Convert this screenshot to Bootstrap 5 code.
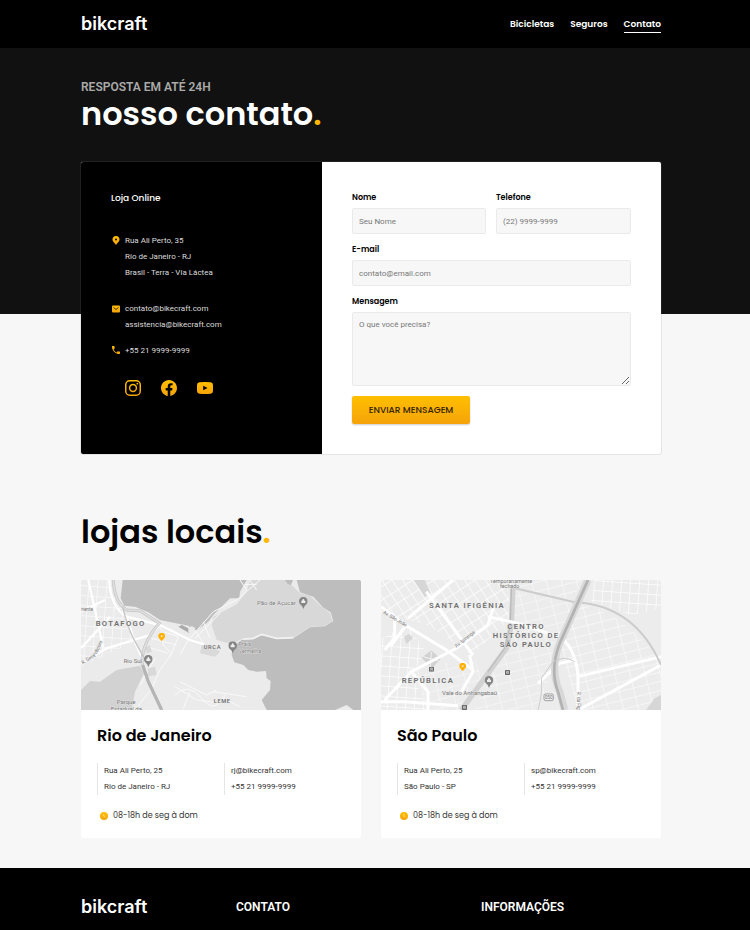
<!DOCTYPE html>
<html lang="pt-BR">
<head>
<meta charset="utf-8">
<meta name="viewport" content="width=device-width, initial-scale=1">
<title>Bikcraft - Contato</title>
<link href="https://cdn.jsdelivr.net/npm/bootstrap@5.3.0/dist/css/bootstrap.min.css" rel="stylesheet">
<style>
:root { --display: Poppins, Inter, sans-serif; --text: Roboto, sans-serif; --amber: #ffb700; }
body { background: #f7f7f7; font-family: var(--text); font-size: 8px; line-height: 16px; color: #333; }
a { color: inherit; text-decoration: none; }
.wrap { max-width: 588px; margin: 0 auto; padding-right: 8px; }
.topbar { background: #000; color: #fff; }
.topbar .wrap { height: 48px; }
.brand { font: 600 18px/20px Inter, sans-serif; color: #fff; }
.menu a { font: 600 9px/16px var(--display); display: block; border-bottom: 1px solid transparent; }
.menu a.active { border-color: #fff; }
.menu { gap: 16px; }
.intro { background: #111; padding: 30px 0 182px; }
.intro p { font-size: 12px; line-height: 18px; font-weight: 600; color: #aaa; }
.big-title { font: 600 32px/36px var(--display); margin: 0; }
.big-title span { color: var(--amber); }
.contact { margin-top: -152px; }
.panel { border-radius: 2px; overflow: hidden; box-shadow: 0 0 0 1px rgba(128,128,128,.15); background: #fff; }
.online { flex: 0 0 241px; background: #000; color: #ddd; padding: 28px 30px; }
.online h2 { font: 500 9px/16px var(--display); color: #fff; margin: 0 0 27px; }
.online address { display: grid; grid-template-columns: 10px 1fr; column-gap: 4px; margin: 0; }
.online address svg { margin: 3px 0 0 1px; }
.online .phone { padding-top: 10px; }
.social { gap: 20px; padding: 21px 0 0 14px; }
.social a, .social svg { display: block; }
.ask { padding: 30px; min-width: 0; display: grid; grid-template-columns: 134px 1fr; gap: 10px; align-content: start; }
.ask .wide { grid-column: 1 / -1; }
.ask label { display: block; font: 600 8px/12px var(--display); color: #000; margin-bottom: 4px; }
.ask .form-control { font: 400 8px/16px var(--text); padding: 4px 6px; min-height: 26px; height: 26px; border: 1px solid #eaeaea; border-radius: 2px; background-color: #f7f7f7; color: #333; }
.ask .form-control::placeholder { color: #777; }
.ask textarea.form-control { height: 74px; display: block; }
.send { font: 500 9px/12px var(--display); color: #332200; border: 0; border-radius: 2px; padding: 8px 15px; width: 118px; white-space: nowrap; background: linear-gradient(#ffbf00, #f5a30a); box-shadow: 0 1px 2px rgba(0,0,0,.2); }
.shops { padding: 60px 0 30px; }
.shops .big-title { color: #000; margin-bottom: 30px; }
.shop-grid { display: grid; grid-template-columns: repeat(auto-fit, minmax(240px, 1fr)); gap: 20px; }
.shop { background: #fff; border-radius: 2px; overflow: hidden; }
.shop .map { display: block; width: 100%; height: 130px; }
.shop-info { padding: 16px 16px 14px; }
.shop h3 { font: 600 16px/20px var(--display); color: #000; margin: 0 0 17px; }
.shop-data { display: grid; grid-template-columns: 1fr 1fr; gap: 6px; }
.shop-data div { border-left: 1px solid #e5e5e5; padding-left: 6px; }
.hours { font: 400 8px/16px var(--display); gap: 5px; padding: 13px 0 0 3px; margin: 0; }
.foot { background: #000; color: #fff; padding: 29px 0; }
.foot-grid { display: grid; grid-template-columns: 155px 245px 1fr; align-items: center; }
.foot h2 { font: 600 12px/20px var(--text); margin: 0; }
.map text { font-family: Roboto, sans-serif; font-weight: 400; fill: #777; paint-order: stroke; stroke: #eee; stroke-width: 2px; font-size: 18px; }
.map .area { font-weight: 600; font-size: 23px; fill: #707070; letter-spacing: 4px; }
.map .area.spot { font-size: 17px; letter-spacing: 2px; }
.map .note { font-size: 16px; }
.map .street { font-size: 14px; }
</style>
</head>
<body>
<svg width="0" height="0" class="position-absolute" aria-hidden="true">
  <defs>
    <linearGradient id="gold" x2="0" y2="1"><stop stop-color="#ffbf00"/><stop offset="1" stop-color="#f5a30a"/></linearGradient>
    <pattern id="gridA" width="26" height="34" patternUnits="userSpaceOnUse" patternTransform="rotate(-33)"><path d="M0 0H26M0 0V34" stroke="#fff" stroke-width="4" fill="none"/></pattern>
    <pattern id="gridB" width="27" height="30" patternUnits="userSpaceOnUse" patternTransform="rotate(4)"><path d="M0 0H27M0 0V30" stroke="#fff" stroke-width="4" fill="none"/></pattern>
    <pattern id="gridC" width="44" height="27" patternUnits="userSpaceOnUse" patternTransform="rotate(-14)"><path d="M0 0H44M0 0V27" stroke="#fff" stroke-width="3" fill="none"/></pattern>
    <symbol id="pin" viewBox="0 0 24 28"><path fill-rule="evenodd" d="M12 0C5 0 1 5 1 11c0 7 7 11 11 17 4-6 11-10 11-17C23 5 19 0 12 0zm0 8a3 3 0 1 1 0 6 3 3 0 0 1 0-6z"/></symbol>
    <symbol id="poi" viewBox="0 0 26 36"><path fill="#858585" d="M13 0C5 0 0 5 0 13c0 7 5 11 9 14l4 9 4-9c4-3 9-7 9-14C26 5 21 0 13 0z"/><path fill="#eee" d="M7 18v-7h3V8l3-3 3 3v3h3v7z"/></symbol>
    <symbol id="metro" viewBox="0 0 15 15"><rect width="15" height="15" rx="2" fill="#666"/><path d="M5 4h5v5H5zM4 12l2-2m5 2l-2-2" stroke="#eee" stroke-width="2" fill="none"/></symbol>
    <symbol id="clock" viewBox="0 0 8 8"><circle cx="4" cy="4" r="4" fill="url(#gold)"/><path d="M3.8 2v2.2l1.4 1" fill="none" stroke="#ffe7a0" stroke-width=".8"/></symbol>
  </defs>
</svg>

<header class="topbar">
  <div class="wrap d-flex align-items-center justify-content-between">
    <a class="brand" href="#">bikcraft</a>
    <nav aria-label="Principal"><ul class="menu list-unstyled d-flex m-0">
      <li><a href="#">Bicicletas</a></li><li><a href="#">Seguros</a></li><li><a class="active" href="#" aria-current="page">Contato</a></li>
    </ul></nav>
  </div>
</header>

<main>
  <section class="intro">
    <div class="wrap">
      <p class="m-0">RESPOSTA EM ATÉ 24H</p>
      <h1 class="big-title text-white">nosso contato<span>.</span></h1>
    </div>
  </section>

  <section class="contact" aria-label="Contato">
    <div class="wrap">
      <div class="panel d-flex flex-wrap flex-sm-nowrap">
        <div class="online">
          <h2>Loja Online</h2>
          <address>
            <svg width="8" height="9" fill="url(#gold)" aria-hidden="true"><use href="#pin"/></svg>
            <div class="mb-3">Rua Ali Perto, 35<br>Rio de Janeiro - RJ<br>Brasil - Terra - Via Láctea</div>
          </address>
          <address class="pt-1">
            <svg width="8" height="8" viewBox="0 0 16 14" class="mt-1" aria-hidden="true"><rect width="16" height="14" rx="2" fill="url(#gold)"/><path d="M3 4l5 4 5-4" fill="none" stroke="#111" stroke-width="1.6"/></svg>
            <div><a href="#">contato@bikecraft.com</a><br><a href="#">assistencia@bikecraft.com</a></div>
          </address>
          <address class="phone">
            <svg width="8" height="8" viewBox="0 0 18 18" aria-hidden="true"><path fill="url(#gold)" d="M3.600 7.800c1.400 2.800 3.800 5.200 6.600 6.600l2.200-2.200c.3-.3.700-.4 1-.2 1.100.4 2.300.6 3.600.6.500 0 1 .4 1 1V17c0 .5-.5 1-1 1C7.600 18 0 10.400 0 1c0-.6.500-1 1-1h3.500c.6 0 1 .4 1 1 0 1.200.2 2.400.6 3.600.1.300 0 .7-.2 1z"/></svg>
            <div><a href="#">+55 21 9999-9999</a></div>
          </address>
          <div class="social d-flex">
            <a href="#" aria-label="Instagram"><svg width="16" height="16" viewBox="0 0 16 16" fill="none" stroke="url(#gold)" stroke-width="1.500"><rect x=".75" y=".75" width="14.500" height="14.500" rx="4"/><circle cx="8" cy="8" r="3.400"/><circle cx="12.300" cy="3.700" r=".9" fill="#ffb700" stroke="none"/></svg></a>
            <a href="#" aria-label="Facebook"><svg width="16" height="16" viewBox="0 0 16 16" fill="url(#gold)"><path d="M16 8.049c0-4.446-3.582-8.050-8-8.050C3.580 0-.002 3.603-.002 8.050c0 4.017 2.926 7.347 6.750 7.951v-5.625h-2.030V8.050H6.750V6.275c0-2.017 1.195-3.131 3.022-3.131.876 0 1.791.157 1.791.157v1.980h-1.009c-.993 0-1.303.621-1.303 1.258v1.510h2.218l-.354 2.326H9.250V16c3.824-.604 6.750-3.934 6.750-7.951z"/></svg></a>
            <a href="#" aria-label="YouTube"><svg width="16" height="16" viewBox="0 0 16 16"><path fill="url(#gold)" fill-rule="evenodd" d="M2.500 2.200q5.500-.5 11 0Q16 2.500 16 5v6q0 2.500-2.500 2.800-5.500.5-11 0Q0 13.500 0 11V5q0-2.500 2.500-2.800zM6.200 5.700v4.600L10.500 8z"/></svg></a>
          </div>
        </div>
        <form class="ask flex-grow-1">
          <div><label for="nome">Nome</label><input id="nome" class="form-control" type="text" placeholder="Seu Nome"></div>
          <div><label for="tel">Telefone</label><input id="tel" class="form-control" type="tel" placeholder="(22) 9999-9999"></div>
          <div class="wide"><label for="email">E-mail</label><input id="email" class="form-control" type="email" placeholder="contato@email.com"></div>
          <div class="wide"><label for="msg">Mensagem</label><textarea id="msg" class="form-control" placeholder="O que você precisa?"></textarea></div>
          <div class="wide"><button class="send d-block" type="button">ENVIAR MENSAGEM</button></div>
        </form>
      </div>
    </div>
  </section>

  <section class="shops">
    <div class="wrap">
      <h2 class="big-title">lojas locais<span>.</span></h2>
      <div class="shop-grid">
        <article class="shop">
          <svg class="map" viewBox="3 15 840 390" preserveAspectRatio="xMidYMid slice" role="img" aria-label="Mapa do Rio de Janeiro">
            <rect x="3" y="15" width="840" height="390" fill="#ebebeb"/>
            <path d="M3 15H95L135 110 160 200 60 250 3 275z" fill="url(#gridB)" opacity=".8"/>
            <path d="M3 345L30 318 60 320 110 285 180 272 192 295 165 350 155 405H3z" fill="#d2d2d2"/>
            <path d="M128 15H500L480 50 478 70 450 70 400 120 385 140 345 170 325 152 240 135 205 112 165 95 133 92 122 70z" fill="#bdbdbd"/>
            <path d="M510 15H620L640 35 660 55 690 62 730 100 750 115 758 138 735 152 690 155 640 188 590 190 545 178 520 192 490 190 455 208 410 195 395 150 400 125 470 88 500 50z" fill="#d8d8d8"/>
            <path d="M650 15H843V405H820L800 390 765 405H560L545 375 570 345 572 318 560 310 558 288 530 290 505 285 490 270 463 262 455 240 458 215 485 195 520 193 545 180 590 192 640 190 690 157 735 154 760 138 752 112 730 98 700 65 660 52z" fill="#bdbdbd"/>
            <path d="M615 15l8 12 10 3 6-15z" fill="#bdbdbd"/>
            <path d="M295 155l10-5 25 12-3 12z" fill="#aaa"/><path d="M325 160q10-12 20 0v12h-20z" fill="#ebebeb"/>
            <path d="M490 192L520 190 545 178 590 190 640 188" fill="none" stroke="#f2f2f2" stroke-width="5"/>
            <path d="M240 140L250 210 275 235 240 285 215 340 170 400 M200 215L265 235 M215 190L290 210 M225 250L180 330 M250 170L295 185 270 245 M330 190L400 110 470 75 540 15 M345 190L420 115 M370 205L345 165 M390 190L370 140 M325 195L300 240 M480 15L500 45 M510 15L530 45 M495 28H530 M285 335L350 375 420 385 M300 320L380 360 410 345 M330 350L310 400 M400 350L500 365 M430 370L480 395 M285 360q40-40 80 10t70-10" fill="none" stroke="#f9f9f9" stroke-width="3"/>
            <path d="M365 210l35 5 20 15-15 15-45-10z M195 218l15-8 5 20-15 5z M205 280l20-5 5 25-30 5z" fill="#d9d9d9"/>
            <path d="M3 110L75 75 M3 220L90 125 M3 265L80 220 210 180 240 150 M25 15L70 220 M88 15Q90 95 140 125L240 150 330 195 372 208 M140 125L160 190 185 245" stroke="#fff" stroke-width="7" fill="none"/>
            <path d="M100 15Q102 80 140 105L180 107 238 145 Q185 205 186 265L205 320 245 405" stroke="#c2c2c2" stroke-width="9" fill="none"/><path d="M100 15Q102 80 140 105L180 107 238 145 Q185 205 186 265L205 320 245 405" stroke="#dfdfdf" stroke-width="5" fill="none"/>
            <path d="M188 270L205 320 245 405" stroke="#b5b5b5" stroke-width="9" fill="none"/>
            <path d="M128 95Q140 150 160 190L190 245" stroke="#c4c4c4" stroke-width="4" fill="none"/>
            <text class="area" x="47" y="153">BOTAFOGO</text>
            <text class="area spot" x="371" y="223">URCA</text>
            <text class="area spot" x="401" y="384">LEME</text>
            <g style="stroke:none"><text x="531" y="90" stroke="none">Pão de Açucar</text></g><text class="note" x="476" y="213">Praia</text><text class="note" x="476" y="233">Vermelha</text>
            <text x="131" y="265">Rio Sul</text><text x="110" y="388">Parque</text><text x="92" y="409">Estadual da</text>
            <text class="street" x="4" y="108">nente</text><text class="street" transform="translate(8 268) rotate(-32)">R. Gen.</text><text class="street" transform="translate(46 246) rotate(-65)">Polidoro</text>
            <use href="#poi" x="657" y="66" width="26" height="36"/><use href="#poi" x="445" y="199" width="26" height="36"/><use href="#poi" x="192" y="240" width="26" height="36"/>
            <use href="#pin" x="233" y="173" width="24" height="26" fill="#ffb000"/>
          </svg>
          <div class="shop-info">
            <h3>Rio de Janeiro</h3>
            <div class="shop-data"><div>Rua Ali Perto, 25<br>Rio de Janeiro - RJ</div><div><a href="#">rj@bikecraft.com</a><br><a href="#">+55 21 9999-9999</a></div></div>
            <p class="hours d-flex align-items-center"><svg width="8" height="8" aria-hidden="true"><use href="#clock"/></svg>08-18h de seg à dom</p>
          </div>
        </article>
        <article class="shop">
          <svg class="map" viewBox="9 15 840 390" preserveAspectRatio="xMidYMid slice" role="img" aria-label="Mapa de São Paulo">
            <rect x="9" y="15" width="840" height="390" fill="#ececec"/>
            <path d="M9 15H400V130L280 240 150 150 9 115z" fill="url(#gridA)"/>
            <path d="M9 190L90 150 150 240 100 290 150 405H9z" fill="url(#gridB)"/>
            <path d="M100 290L280 240 320 320 240 405H150z M410 50L600 80 530 260 480 405H290L370 240z" fill="url(#gridC)" opacity=".8"/>
            <path d="M600 90Q720 95 849 260V405H600L545 220z" fill="url(#gridC)"/>
            <path d="M650 15H849V100L760 120 640 80z" fill="url(#gridB)"/>
            <path d="M420 15H610L590 75 420 40z" fill="url(#gridC)"/>
            <path d="M107 15H140L158 55 140 65z M78 185l15-8 12 12-20 18z M830 370l19-10v45h-45z" fill="#d6d6d6"/>
            <path d="M130 248l30-22 28 25-25 28z" fill="#d2d2d2"/><path d="M135 245l45 12M160 230l-3 45" stroke="#f4f4f4" stroke-width="3"/>
            <path d="M405 35L400 150 385 220 250 405" fill="none" stroke="#d2d2d2" stroke-width="16"/><path d="M400 40L397 150 380 220 330 290" fill="none" stroke="#b4b4b4" stroke-width="3"/>
            <path d="M225 15L90 130 M9 95L90 155 205 225 285 285 M145 50L285 240 M50 130V190L20 225 M345 100L330 150 235 220 100 290 150 350V405 M330 125L420 145 540 185 Q590 210 600 300V405 M9 380H80L240 392 M600 305L849 245 M849 270L600 405 M480 325L545 265 590 255 M275 240L285 290 250 350 M85 150L40 210 M100 290L20 375" fill="none" stroke="#fff" stroke-width="9"/>
            <path d="M405 38L590 82Q770 90 849 270" fill="none" stroke="#ccc" stroke-width="6"/>
            <path d="M630 15L545 205 Q515 285 545 350L560 405" fill="none" stroke="#d8d8d8" stroke-width="22"/><path d="M630 15L545 205 Q515 285 540 350L555 405" fill="none" stroke="#b2b2b2" stroke-width="8"/><path d="M480 405Q495 350 490 310L525 260Q560 240 590 260" fill="none" stroke="#ccc" stroke-width="3"/>
            <text class="area" x="153" y="99">SANTA IFIGÊNIA</text>
            <text class="area" x="388" y="161">CENTRO</text><text class="area" x="344" y="188">HISTÓRICO DE</text><text class="area" x="365" y="215">SÃO PAULO</text>
            <text class="area" x="71" y="323">REPÚBLICA</text>
            <text x="192" y="360">Vale do Anhangabaú</text><text class="note" x="336" y="24">Temporariamente</text><text class="note" x="366" y="39">fechado</text>
            <text class="street" transform="translate(14 115) rotate(30)">Av. São João</text><text class="street" transform="translate(235 218) rotate(-38)">Av. Ipiranga</text><text class="street" transform="translate(598 350) rotate(90)">R. da Fig</text>
            <rect x="498" y="357" width="28" height="20" rx="5" fill="#eee" stroke="#777" stroke-width="2"/><text class="street" x="500" y="373">050</text>
            <use href="#metro" x="153" y="275" width="15" height="15"/><use href="#metro" x="381" y="285" width="15" height="15"/><use href="#metro" x="252" y="390" width="15" height="15"/>
            <use href="#poi" x="320" y="303" width="26" height="36"/>
            <use href="#pin" x="242" y="263" width="24" height="26" fill="#ffb000"/>
          </svg>
          <div class="shop-info">
            <h3>São Paulo</h3>
            <div class="shop-data"><div>Rua Ali Perto, 25<br>São Paulo - SP</div><div><a href="#">sp@bikecraft.com</a><br><a href="#">+55 21 9999-9999</a></div></div>
            <p class="hours d-flex align-items-center"><svg width="8" height="8" aria-hidden="true"><use href="#clock"/></svg>08-18h de seg à dom</p>
          </div>
        </article>
      </div>
    </div>
  </section>
</main>

<footer class="foot">
  <div class="wrap foot-grid">
    <a class="brand" href="#">bikcraft</a>
    <h2>CONTATO</h2>
    <h2>INFORMAÇÕES</h2>
  </div>
</footer>
</body>
</html>
